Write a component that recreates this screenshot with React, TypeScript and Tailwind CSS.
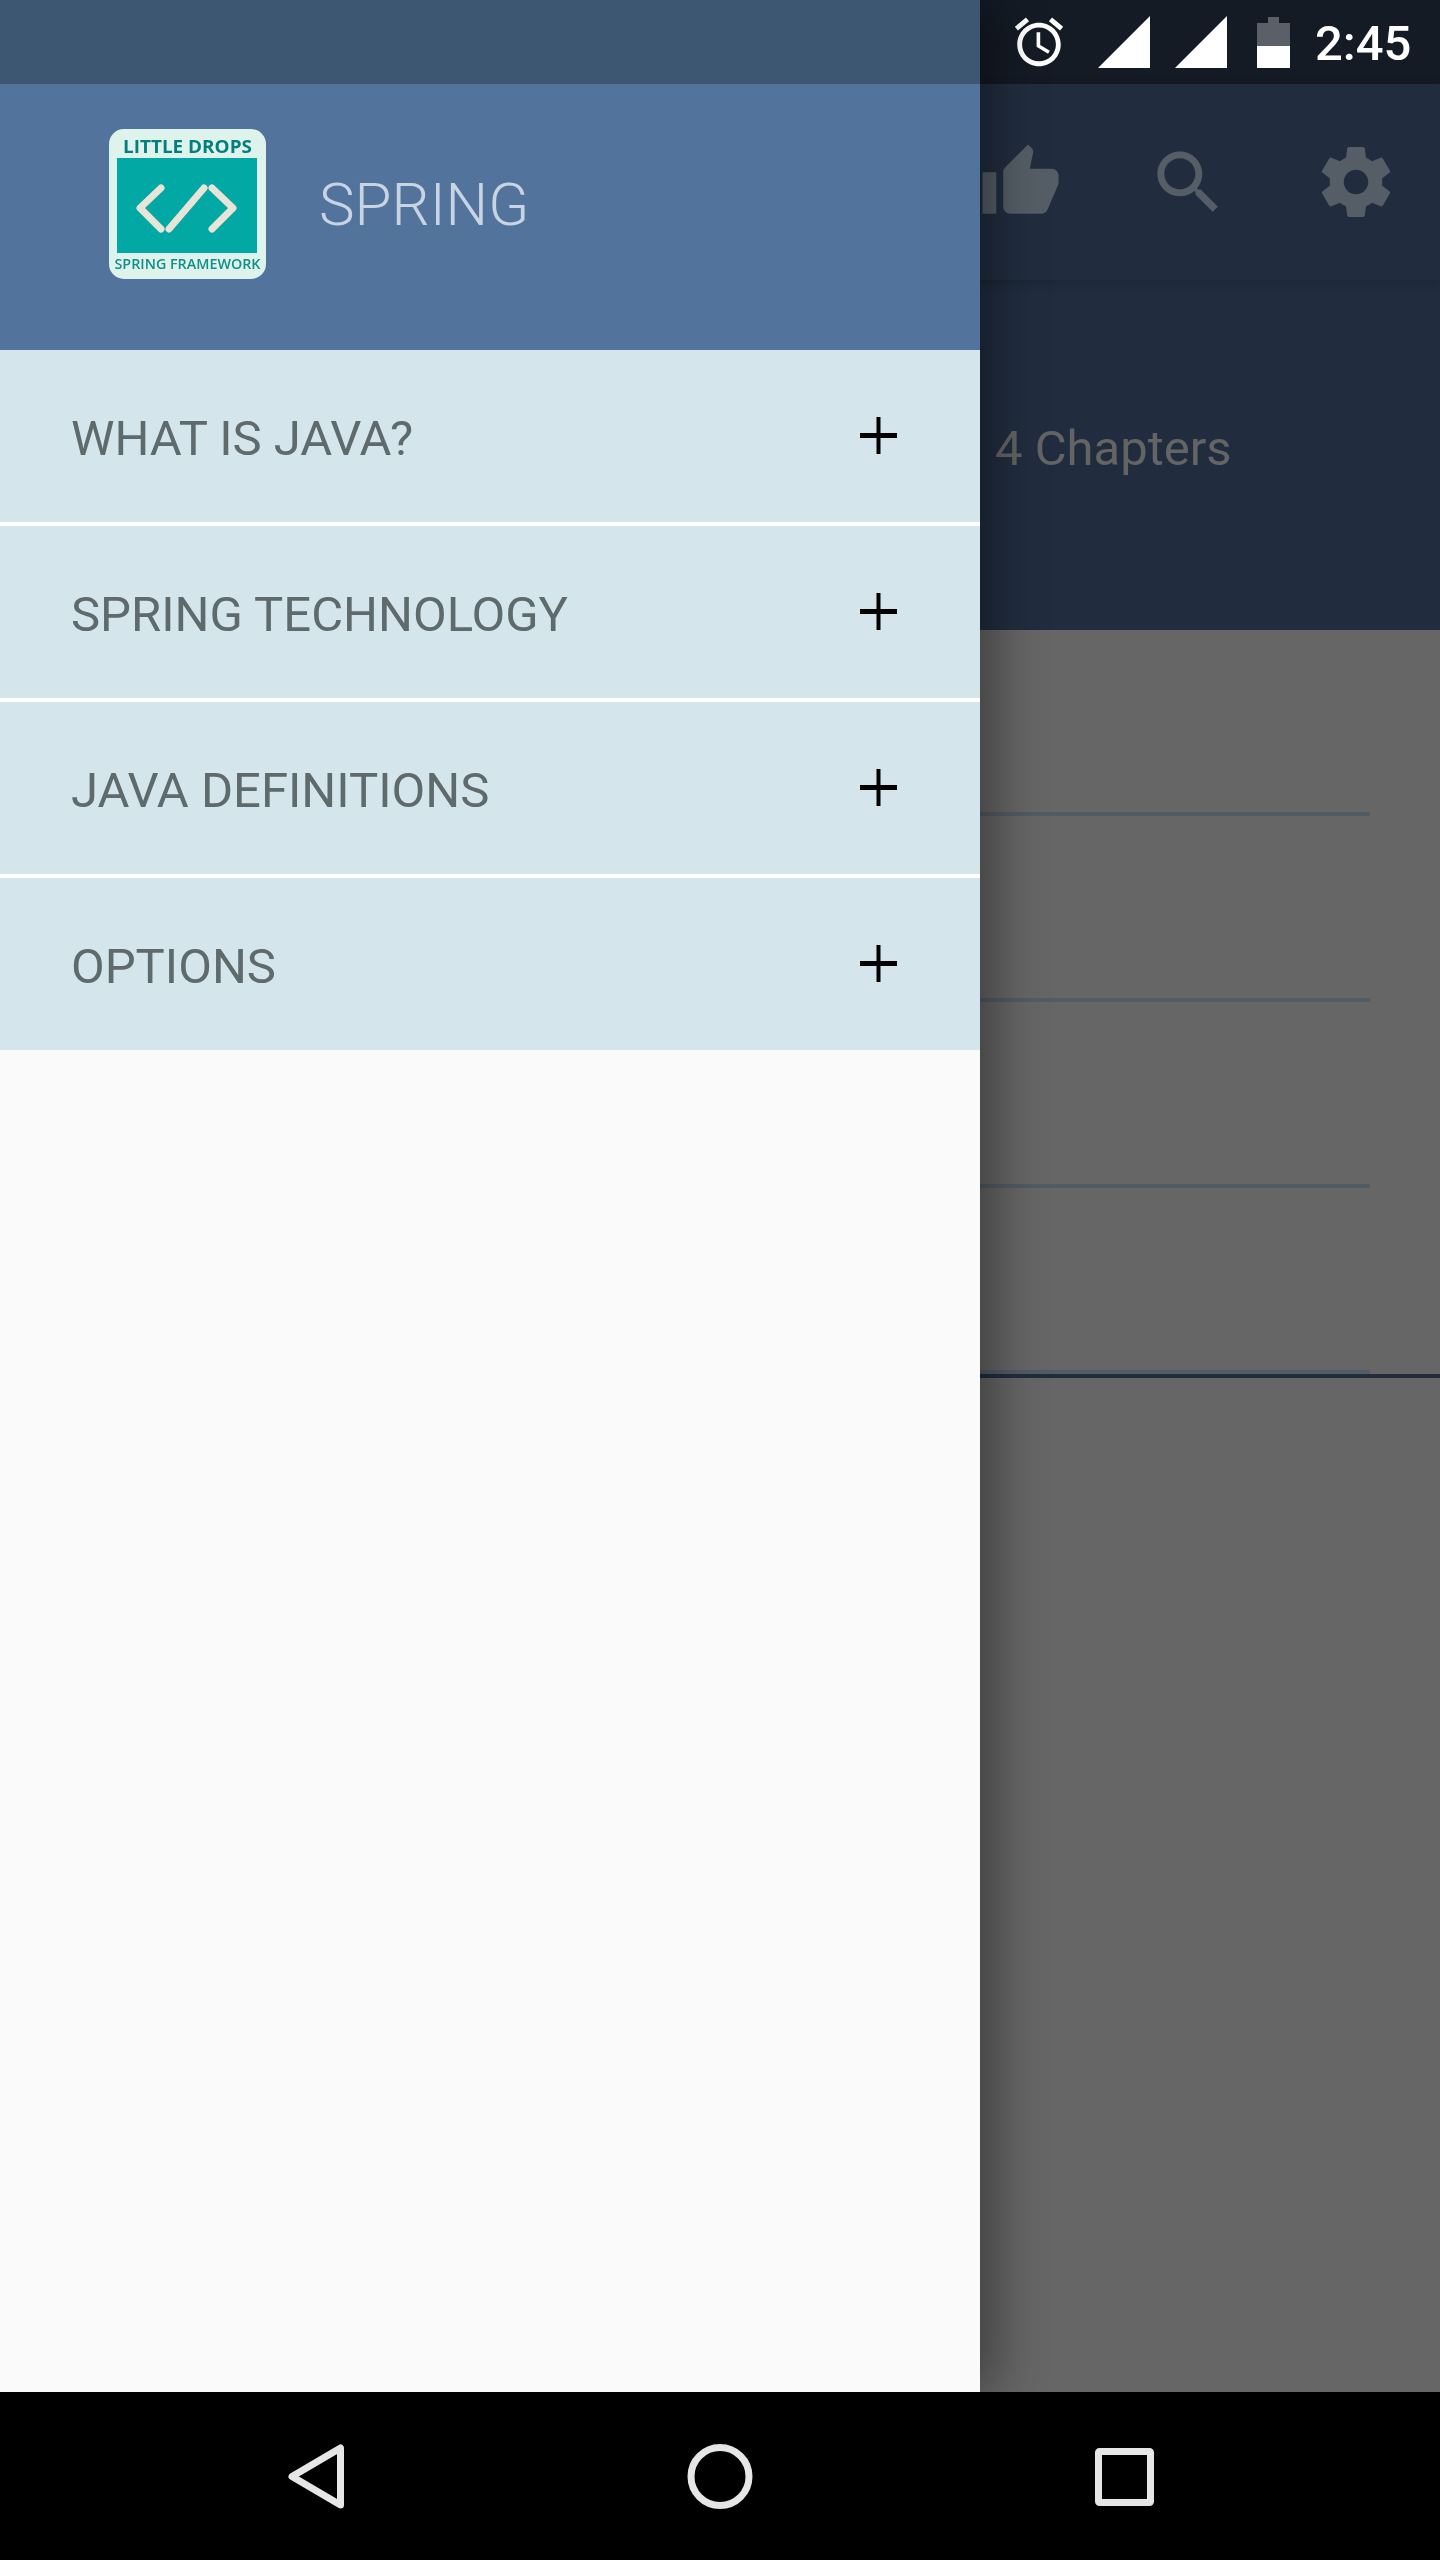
const P = {
  thumb: "M1 21h4V9H1v12zm22-11c0-1.1-.9-2-2-2h-6.31l.95-4.57.03-.32c0-.41-.17-.79-.44-1.06L14.17 1 7.59 7.59C7.22 7.95 7 8.45 7 9v10c0 1.1.9 2 2 2h9c.83 0 1.54-.5 1.84-1.22l3.02-7.05c.09-.23.14-.47.14-.73v-2z",
  search: "M15.5 14h-.79l-.28-.27C15.41 12.59 16 11.11 16 9.5 16 5.91 13.09 3 9.5 3S3 5.91 3 9.5 5.91 16 9.5 16c1.61 0 3.09-.59 4.23-1.57l.27.28v.79l5 4.99L20.49 19l-4.99-5zm-6 0C7.01 14 5 11.99 5 9.5S7.01 5 9.5 5 14 7.01 14 9.5 11.99 14 9.5 14z",
  gear: "M19.43 12.98c.04-.32.07-.64.07-.98s-.03-.66-.07-.98l2.11-1.65c.19-.15.24-.42.12-.64l-2-3.46c-.12-.22-.39-.3-.61-.22l-2.49 1c-.52-.4-1.08-.73-1.69-.98l-.38-2.65C14.46 2.18 14.25 2 14 2h-4c-.25 0-.46.18-.49.42l-.38 2.65c-.61.25-1.17.59-1.69.98l-2.49-1c-.23-.09-.49 0-.61.22l-2 3.46c-.13.22-.07.49.12.64l2.11 1.65c-.04.32-.07.65-.07.98s.03.66.07.98l-2.11 1.65c-.19.15-.24.42-.12.64l2 3.46c.12.22.39.3.61.22l2.49-1c.52.4 1.08.73 1.69.98l.38 2.65c.03.24.24.42.49.42h4c.25 0 .46-.18.49-.42l.38-2.65c.61-.25 1.17-.59 1.69-.98l2.49 1c.23.09.49 0 .61-.22l2-3.46c.12-.22.07-.49-.12-.64l-2.11-1.65zM12 15.5c-1.93 0-3.5-1.57-3.5-3.5s1.57-3.5 3.5-3.5 3.5 1.57 3.5 3.5-1.57 3.5-3.5 3.5z",
  alarm: "M22 5.72l-4.6-3.86-1.29 1.53 4.6 3.86L22 5.72zM7.88 3.39L6.6 1.86 2 5.71l1.29 1.53 4.59-3.85zM12.5 8H11v6l4.75 2.85.75-1.23-4-2.37V8zM12 4c-4.97 0-9 4.03-9 9s4.03 9 9 9 9-4.03 9-9-4.03-9-9-9zm0 16c-3.87 0-7-3.13-7-7s3.13-7 7-7 7 3.13 7 7-3.13 7-7 7z",
};

function Signal() {
  return (
    <svg viewBox="0 0 52 52" className="w-[52px] h-[52px] shrink-0" fill="#ffffff">
      <polygon points="0,52 52,0 52,52" />
    </svg>
  );
}

function Battery() {
  return (
    <svg viewBox="0 0 33 51" className="w-[33px] h-[51px] shrink-0">
      <path d="M11 0h11v6h11v23H0V6h11z" fill="#5a5f68" />
      <rect x="0" y="29" width="33" height="22" fill="#ffffff" />
    </svg>
  );
}

function Logo() {
  return (
    <svg viewBox="0 0 157 150" className="w-[157px] h-[150px] shrink-0 blur-[0.4px]">
      <rect width="157" height="150" rx="15" fill="#dff3ed" />
      <rect x="8" y="29" width="140" height="95" fill="#02a8a3" />
      <text x="78.5" y="24" textAnchor="middle" textLength="129" lengthAdjust="spacingAndGlyphs" fontFamily="'Open Sans', sans-serif" fontWeight="700" fontSize="17" fill="#037f7d">LITTLE DROPS</text>
      <text x="78.5" y="140" textAnchor="middle" textLength="146" lengthAdjust="spacingAndGlyphs" fontFamily="'Open Sans', sans-serif" fontWeight="600" fontSize="13.5" fill="#108f8a">SPRING FRAMEWORK</text>
      <g fill="none" stroke="#e8e4d8" strokeWidth="7" strokeLinecap="round" strokeLinejoin="round">
        <path d="M52 59 31 79 52 100" />
        <path d="M95 59 60 100" />
        <path d="M103 59 124 79 103 100" />
      </g>
    </svg>
  );
}

function Row({ label }: { label: string }) {
  return (
    <div className="h-[172px] bg-[#d4e6eb] flex items-center pl-[71px] pr-[83px]">
      <span className="flex-1 text-[49px] leading-none text-[#5f6a6d] mt-[5px]">{label}</span>
      <svg viewBox="0 0 37 37" className="w-[37px] h-[37px] shrink-0 -mt-[2px]" fill="#000000">
        <rect x="0" y="16" width="37" height="5" />
        <rect x="16.5" y="0" width="4" height="37" />
      </svg>
    </div>
  );
}

function Hidden({ d, className }: { d: string; className: string }) {
  return (
    <svg viewBox="0 0 24 24" className={className} fill="#555e66">
      <path d={d} />
    </svg>
  );
}

export default function App() {
  return (
    <div className="w-[1440px] h-[2560px] flex flex-col overflow-hidden bg-black font-['Roboto',sans-serif]">
      <div className="flex h-[2392px]">
        <aside className="relative z-20 w-[980px] shrink-0 flex flex-col bg-[#fafafa] shadow-[12px_0_50px_rgba(0,0,0,0.42)]">
          <div className="h-[84px] bg-[#3d5672]" />
          <div className="h-[266px] bg-[#52739b] flex items-center pl-[109px] pb-[26px] gap-[54px]">
            <Logo />
            <span className="text-[60px] leading-none font-light text-[#c9d4e3] mt-[2px] -ml-[1px]">SPRING</span>
          </div>
          <div className="flex flex-col gap-[4px] bg-white">
            <Row label="WHAT IS JAVA?" />
            <Row label="SPRING TECHNOLOGY" />
            <Row label="JAVA DEFINITIONS" />
            <Row label="OPTIONS" />
          </div>
        </aside>

        <section className="flex-1 flex flex-col bg-[#666666]">
          <div className="h-[84px] bg-[#141b25] flex items-center pl-[30px] text-white">
            <svg viewBox="0 0 24 24" className="w-[58px] h-[58px] shrink-0" fill="#ffffff">
              <path d={P.alarm} />
            </svg>
            <div className="ml-[30px]"><Signal /></div>
            <div className="ml-[25px]"><Signal /></div>
            <div className="ml-[30px]"><Battery /></div>
            <span className="ml-[25px] text-[49px] leading-none font-medium mt-[3px]">2:45</span>
          </div>
          <div className="relative z-10 h-[196px] bg-[#212d3f] shadow-[0_3px_10px_rgba(0,0,0,0.2)] flex items-center -ml-[1px]">
            <Hidden d={P.thumb} className="w-[83px] h-[83px] shrink-0" />
            <Hidden d={P.search} className="w-[83px] h-[83px] shrink-0 ml-[85px]" />
            <Hidden d={P.gear} className="w-[84px] h-[84px] shrink-0 ml-[84px]" />
          </div>
          <div className="h-[350px] bg-[#212d3f] flex items-center pl-[15px]">
            <span className="text-[49px] leading-none text-[#646464] -mt-[14px]">4 Chapters</span>
          </div>
          <div className="flex flex-col pr-[70px]">
            <div className="h-[186px] border-b-4 border-[#525c63]" />
            <div className="h-[186px] border-b-4 border-[#525c63]" />
            <div className="h-[186px] border-b-4 border-[#525c63]" />
            <div className="h-[186px] border-b-4 border-[#525c63]" />
          </div>
          <div className="h-[4px] bg-[#212d3f]" />
        </section>
      </div>

      <nav className="h-[168px] bg-black flex items-center pl-[268px] gap-[308px]">
        <svg viewBox="0 0 96 96" className="w-[96px] h-[96px] shrink-0" fill="none" stroke="#e6e6e6" strokeWidth="7" strokeLinejoin="round">
          <path d="M24 48.5 72.5 20v57z" />
        </svg>
        <svg viewBox="0 0 96 96" className="w-[96px] h-[96px] shrink-0" fill="none" stroke="#e6e6e6" strokeWidth="7">
          <circle cx="48" cy="48.5" r="29" />
        </svg>
        <svg viewBox="0 0 96 96" className="w-[96px] h-[96px] shrink-0" fill="none" stroke="#e6e6e6" strokeWidth="7">
          <rect x="22.5" y="23.5" width="52" height="51" rx="1" />
        </svg>
      </nav>
    </div>
  );
}
